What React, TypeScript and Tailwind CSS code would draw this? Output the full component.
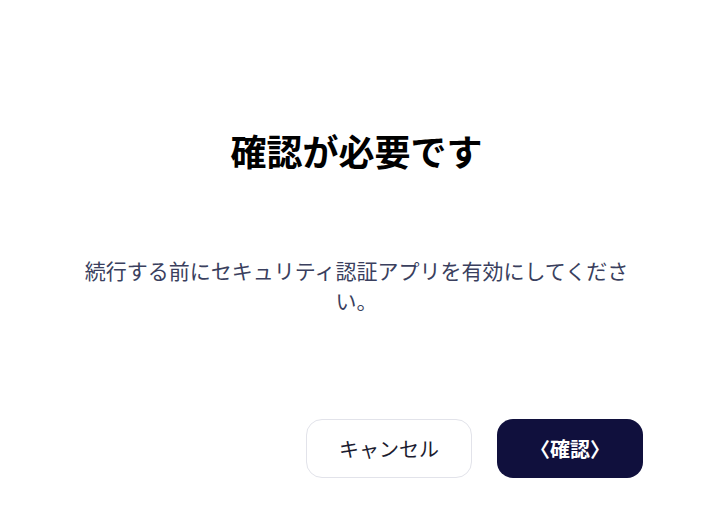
export default function App() {
  return (
    <div
      className="flex h-[523px] w-full flex-col items-center bg-white px-[70px]"
      style={{ fontFamily: '"Noto Sans CJK JP", "Noto Sans", sans-serif' }}
    >
      <h1 className="mt-[128px] text-[36px] font-bold leading-[44px] text-black">
        確認が必要です
      </h1>
      <p className="mt-[83px] w-[560px] text-center text-[21px] leading-[30px] text-[#3a3f5e]">
        続行する前にセキュリティ認証アプリを有効にしてください。
      </p>
      <div className="mt-[104px] flex w-full justify-end gap-[25px]">
        <button className="h-[59px] w-[166px] rounded-2xl border border-[#e2e3ea] bg-white text-[20px] text-[#1b1b2f]">
          キャンセル
        </button>
        <button className="h-[59px] w-[146px] rounded-2xl bg-[#10103d] text-[20px] font-semibold text-white">
          〈確認〉
        </button>
      </div>
    </div>
  )
}
